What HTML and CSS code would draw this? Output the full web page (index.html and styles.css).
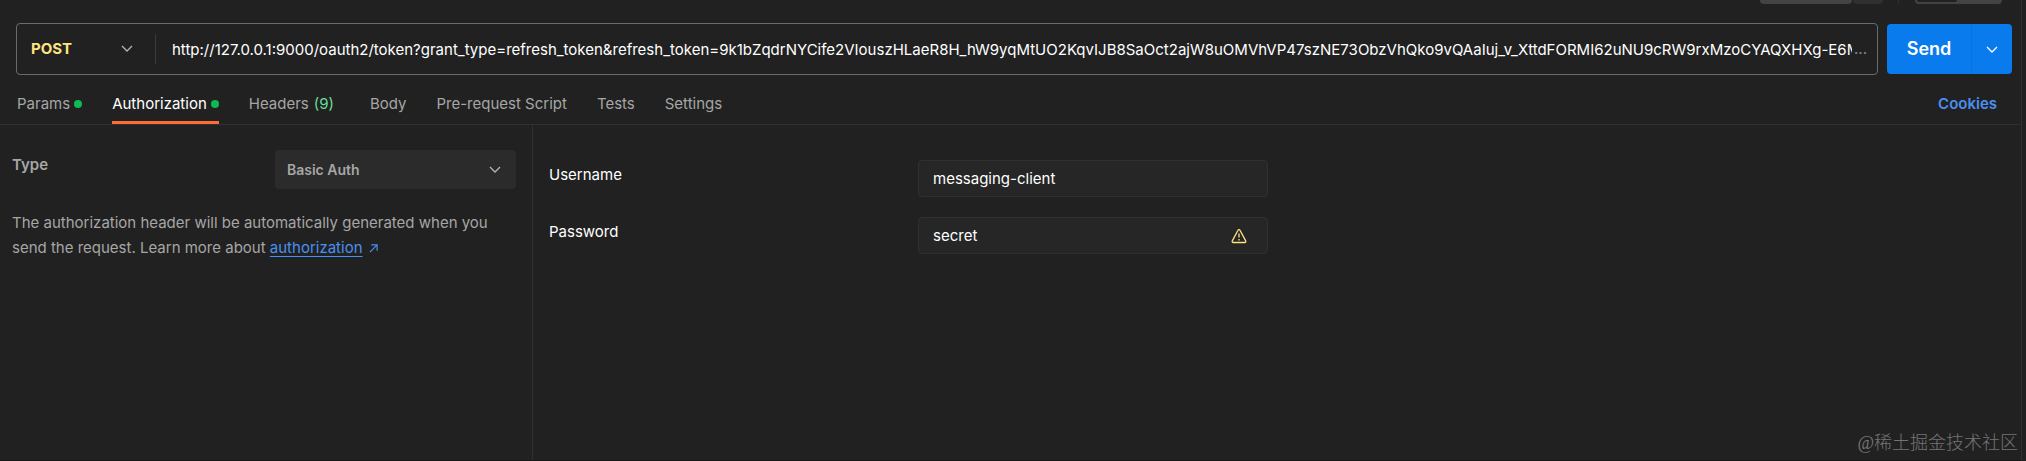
FILE: index.html
```html
<!DOCTYPE html>
<html lang="en">
<head>
<meta charset="UTF-8">
<meta name="viewport" content="width=device-width, initial-scale=1.0">
<title>Request</title>
<link rel="stylesheet" href="styles.css">
</head>
<body>
<main class="request">
  <div class="toolbar">
    <div class="save"></div>
    <div class="save-more"></div>
    <div class="toolbar-line"></div>
    <div class="switch"><div class="switch-on"></div></div>
  </div>

  <form class="request-bar">
    <div class="url-box">
      <div class="select-wrap">
        <select class="method" aria-label="Method">
          <option>POST</option>
          <option>GET</option>
        </select>
        <svg class="chevron" viewBox="0 0 12 8"><path d="M1 1l5 5 5-5"/></svg>
      </div>
      <input class="url" type="text" aria-label="Request URL" value="http://127.0.0.1:9000/oauth2/token?grant_type=refresh_token&amp;refresh_token=9k1bZqdrNYCife2VIouszHLaeR8H_hW9yqMtUO2KqvIJB8SaOct2ajW8uOMVhVP47szNE73ObzVhQko9vQAaIuj_v_XttdFORMI62uNU9cRW9rxMzoCYAQXHXg-E6MzT4">
      <span class="more">...</span>
    </div>
    <div class="send-group">
      <button class="send" type="button">Send</button>
      <button class="send-more" type="button" aria-label="Send options">
        <svg class="chevron" viewBox="0 0 12 8"><path d="M1 1l5 5 5-5"/></svg>
      </button>
    </div>
  </form>

  <nav class="tabs">
    <button class="tab">Params<span class="dot"></span></button>
    <button class="tab active">Authorization<span class="dot"></span></button>
    <button class="tab headers">Headers <span class="count">(9)</span></button>
    <button class="tab">Body</button>
    <button class="tab">Pre-request Script</button>
    <button class="tab">Tests</button>
    <button class="tab">Settings</button>
    <a class="cookies" href="#">Cookies</a>
  </nav>

  <div class="content">
    <section class="auth-type">
      <div class="type-row">
        <label class="type-label" for="authType">Type</label>
        <div class="select-wrap">
          <select class="type-select" id="authType">
            <option>Basic Auth</option>
            <option>Bearer Token</option>
          </select>
          <svg class="chevron" viewBox="0 0 12 8"><path d="M1 1l5 5 5-5"/></svg>
        </div>
      </div>
      <p class="help">The authorization header will be automatically generated when you send the request. Learn more about <a class="help-link" href="#">authorization</a><svg class="external" viewBox="0 0 10 10"><path d="M1 9l7.5-7.5M2.5 1h6.5v6.5"/></svg></p>
    </section>
    <section class="auth-fields">
      <div class="field">
        <label class="field-label" for="username">Username</label>
        <div class="field-box"><input class="field-input" type="text" id="username" value="messaging-client"></div>
      </div>
      <div class="field">
        <label class="field-label" for="password">Password</label>
        <div class="field-box">
          <input class="field-input" type="text" id="password" value="secret">
          <svg class="warning" viewBox="0 0 16 16"><path d="M7 2.2L1.3 12.8a1.1 1.1 0 0 0 1 1.7h11.4a1.1 1.1 0 0 0 1-1.7L9 2.2a1.1 1.1 0 0 0-2 0z"/><path d="M8 5.5v4M8 11v1.5"/></svg>
        </div>
      </div>
    </section>
  </div>
  <div class="watermark">@稀土掘金技术社区</div>
</main>
</body>
</html>
```
FILE: styles.css
```css
* {
  box-sizing: border-box;
}
body {
  margin: 0;
  background-color: #212121;
  color: #fff;
  font-family: Inter, "Noto Sans CJK SC", sans-serif;
  font-size: 15px;
  line-height: 24px;
}
button, input, select {
  font: inherit;
  color: inherit;
  background: none;
  border: none;
  margin: 0;
  padding: 0;
}
input {
  min-width: 0;
  outline: none;
}
select {
  appearance: none;
  width: 100%;
}
.request {
  display: flex;
  flex-direction: column;
  min-height: 100vh;
  margin-right: 4px;
  border-right: 1px solid #303030;
  border-bottom: 1px solid #171717;
}
/* bottom edge of the save / view buttons */
.toolbar {
  display: flex;
  justify-content: flex-end;
  height: 4px;
  padding-right: 19px;
}
.save {
  width: 92px;
  background-color: #434343;
  border-radius: 0 0 4px 4px;
}
.save-more {
  width: 30px;
  margin-left: 1px;
  background-color: #303030;
  border-radius: 0 0 4px 4px;
}
.toolbar-line {
  width: 1px;
  margin: 0 16px 0 15px;
  background-color: #303030;
}
.switch {
  width: 87px;
  background-color: #434343;
  border-radius: 0 0 4px 4px;
}
.switch-on {
  width: 40px;
  height: 2px;
  margin-left: 2px;
  background-color: #212121;
  border-radius: 0 0 3px 3px;
}
.request-bar {
  display: flex;
  align-items: center;
  gap: 9px;
  padding: 19px 9px 0 16px;
}
.url-box {
  display: flex;
  align-items: center;
  flex: 1;
  min-width: 0;
  height: 52px;
  padding-right: 10px;
  border: 1px solid #6b6b6b;
  border-radius: 4px;
}
.select-wrap {
  display: grid;
  align-items: center;
}
.select-wrap > * {
  grid-area: 1 / 1;
}
.select-wrap .chevron {
  justify-self: end;
  margin-right: 15px;
  pointer-events: none;
}
.chevron {
  width: 12px;
  height: 8px;
  fill: none;
  stroke: #b5b5b5;
  stroke-width: 1.3;
}
.url-box .select-wrap {
  width: 139px;
  border-right: 1px solid #3b3b3b;
}
.url-box .select-wrap .chevron {
  margin-right: 22px;
}
.method {
  height: 30px;
  padding-left: 14px;
  color: #ffe47e;
  font-weight: 700;
}
.url {
  flex: 1;
  height: 30px;
  margin-left: 16px;
}
.more {
  padding-left: 2px;
  color: #8a8a8a;
}
.send-group {
  display: flex;
  height: 50px;
  background-color: #097bed;
  border-radius: 4px;
}
.send {
  width: 84px;
  font-size: 18px;
  font-weight: 600;
}
.send-more {
  width: 41px;
  border-left: 1px solid #0a72da;
}
.send-more .chevron {
  stroke: #fff;
}
.tabs {
  display: flex;
  gap: 30px;
  height: 50px;
  padding: 9px 24px 0 17px;
  border-bottom: 1px solid #303030;
}
.tab {
  display: flex;
  align-items: center;
  gap: 4px;
  color: #a6a6a6;
  border-top: 3px solid transparent;
  border-bottom: 3px solid transparent;
}
.tab.active {
  color: #fff;
  border-bottom-color: #ff6c37;
}
.headers {
  gap: 5px;
  margin-right: 6px;
}
.dot {
  width: 8px;
  height: 8px;
  background-color: #0cbb52;
  border-radius: 50%;
}
.count {
  color: #6bdd9a;
}
.cookies {
  align-self: center;
  margin-left: auto;
  color: #4a90f0;
  font-weight: 600;
  text-decoration: none;
}
.content {
  display: flex;
  flex: 1;
}
.auth-type {
  width: 533px;
  padding: 25px 16px 0 12px;
  border-right: 1px solid #303030;
}
.type-row {
  display: flex;
  justify-content: space-between;
  color: #a6a6a6;
  font-weight: 600;
}
.type-label {
  padding-top: 3px;
}
.type-row .select-wrap {
  width: 241px;
}
.type-select {
  height: 39px;
  padding-left: 12px;
  font-size: 14px;
  background-color: #2b2b2b;
  border-radius: 4px;
}
.help {
  margin: 21px 0 0;
  color: #a6a6a6;
  line-height: 25px;
}
.help-link {
  color: #4a90f0;
  text-underline-offset: 3px;
}
.external {
  width: 9px;
  height: 9px;
  margin-left: 6px;
  fill: none;
  stroke: #4a90f0;
  stroke-width: 1.3;
}
.auth-fields {
  display: flex;
  flex-direction: column;
  flex: 1;
  gap: 20px;
  padding: 35px 16px 0;
}
.field {
  display: flex;
}
.field-label {
  width: 369px;
  padding-top: 3px;
}
.field-box {
  display: flex;
  align-items: center;
  width: 350px;
  height: 37px;
  padding: 0 20px 0 14px;
  background-color: #262626;
  border: 1px solid #303030;
  border-radius: 4px;
}
.field-input {
  flex: 1;
}
.warning {
  width: 16px;
  height: 16px;
  fill: none;
  stroke: #ffe47e;
  stroke-width: 1.3;
}
.watermark {
  position: absolute;
  right: 8px;
  bottom: 6px;
  color: #757575;
  font-family: "Liberation Serif", "Noto Sans CJK SC", serif;
  font-size: 18px;
  font-weight: 300;
}
```
